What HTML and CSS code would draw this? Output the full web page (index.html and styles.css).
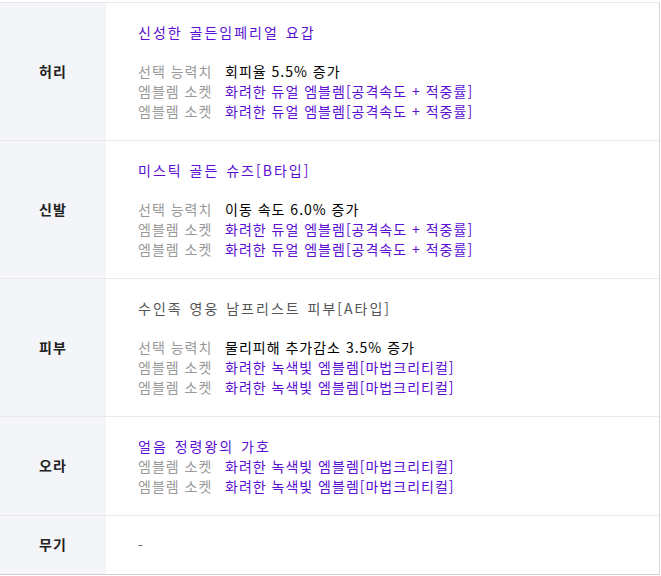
FILE: index.html
```html
<!DOCTYPE html>
<html lang="ko">
<head>
    <meta charset="UTF-8">
    <meta name="viewport" content="width=device-width, initial-scale=1.0">
    <title>장비 정보</title>
    <link rel="stylesheet" href="styles.css">
</head>
<body>
    <div class="equip">
        <div class="row">
            <div class="slot">허리</div>
            <div class="info">
                <p class="name">신성한 골든임페리얼 요갑</p>
                <ul class="opts">
                    <li><span class="key">선택 능력치</span><span class="val">회피율 5.5% 증가</span></li>
                    <li><span class="key">엠블렘 소켓</span><span class="val purple">화려한 듀얼 엠블렘[공격속도 + 적중률]</span></li>
                    <li><span class="key">엠블렘 소켓</span><span class="val purple">화려한 듀얼 엠블렘[공격속도 + 적중률]</span></li>
                </ul>
            </div>
        </div>
        <div class="row">
            <div class="slot">신발</div>
            <div class="info">
                <p class="name">미스틱 골든 슈즈[B타입]</p>
                <ul class="opts">
                    <li><span class="key">선택 능력치</span><span class="val">이동 속도 6.0% 증가</span></li>
                    <li><span class="key">엠블렘 소켓</span><span class="val purple">화려한 듀얼 엠블렘[공격속도 + 적중률]</span></li>
                    <li><span class="key">엠블렘 소켓</span><span class="val purple">화려한 듀얼 엠블렘[공격속도 + 적중률]</span></li>
                </ul>
            </div>
        </div>
        <div class="row">
            <div class="slot">피부</div>
            <div class="info">
                <p class="name plain">수인족 영웅 남프리스트 피부[A타입]</p>
                <ul class="opts">
                    <li><span class="key">선택 능력치</span><span class="val">물리피해 추가감소 3.5% 증가</span></li>
                    <li><span class="key">엠블렘 소켓</span><span class="val purple">화려한 녹색빛 엠블렘[마법크리티컬]</span></li>
                    <li><span class="key">엠블렘 소켓</span><span class="val purple">화려한 녹색빛 엠블렘[마법크리티컬]</span></li>
                </ul>
            </div>
        </div>
        <div class="row">
            <div class="slot">오라</div>
            <div class="info">
                <p class="name tight">얼음 정령왕의 가호</p>
                <ul class="opts">
                    <li><span class="key">엠블렘 소켓</span><span class="val purple">화려한 녹색빛 엠블렘[마법크리티컬]</span></li>
                    <li><span class="key">엠블렘 소켓</span><span class="val purple">화려한 녹색빛 엠블렘[마법크리티컬]</span></li>
                </ul>
            </div>
        </div>
        <div class="row last">
            <div class="slot">무기</div>
            <div class="info">
                <p class="empty">-</p>
            </div>
        </div>
    </div>
</body>
</html>
```

FILE: styles.css
```css
* {
    margin: 0;
    padding: 0;
    box-sizing: border-box;
}

body {
    background: #fff;
    font-family: "Noto Sans CJK KR", "Noto Sans", sans-serif;
    font-size: 14px;
    line-height: 20px;
    color: #000;
    padding-top: 2px;
}

.equip {
    width: 660px;
    border-top: 1px solid #e9e9ed;
    border-right: 1px solid #d6d6da;
    border-bottom: 1px solid #cfcfd4;
}

.row {
    display: flex;
    border-bottom: 1px solid #e9e9ed;
}

.row.last {
    border-bottom: none;
}

.slot {
    width: 106px;
    flex-shrink: 0;
    background: #f4f5f9;
    display: flex;
    align-items: center;
    justify-content: center;
    font-weight: bold;
    color: #222;
    letter-spacing: 1px;
    padding-bottom: 2px;
}

.info {
    flex: 1;
    padding: 19px 0 19px 32px;
    letter-spacing: 1px;
}

.name {
    color: #5a0fd2;
    margin-bottom: 19px;
    letter-spacing: 2px;
    word-spacing: 1px;
}

.name.plain {
    color: #555;
}

.name.tight {
    margin-bottom: 0;
}

.opts {
    list-style: none;
}

.opts li {
    display: flex;
}

.key {
    width: 87px;
    flex-shrink: 0;
    color: #999;
}

.val.purple {
    color: #5a0fd2;
}

.empty {
    color: #666;
}
```
